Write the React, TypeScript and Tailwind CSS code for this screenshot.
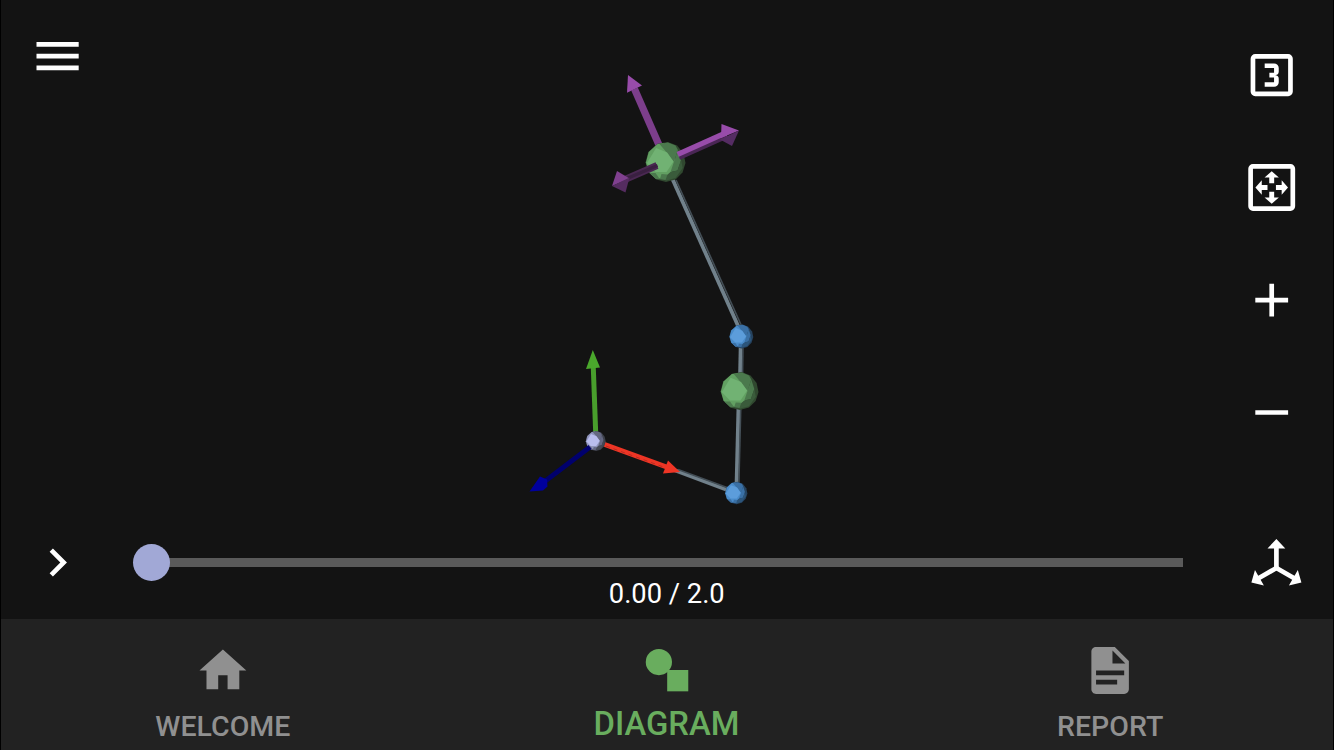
import type { ReactNode } from 'react';

type IconProps = { children: ReactNode; dx?: number; dy?: number };

/** Icon on a 24-unit grid; dx and dy nudge the drawing in those units. */
function Icon({ children, dx = 0, dy = 0 }: IconProps) {
  return (
    <svg viewBox="0 0 24 24" className="size-[56.25px] shrink-0" fill="currentColor">
      <g transform={`translate(${dx} ${dy})`}>{children}</g>
    </svg>
  );
}

type BallProps = { x: number; y: number; r: number; tones: string[] };

/** Low-poly sphere: tones run from the lit face to the shaded rim. */
function Ball({ x, y, r, tones }: BallProps) {
  return (
    <g transform={`translate(${x} ${y}) scale(${r})`}>
      <polygon fill={tones[3]} points="-.4,-.91 .12,-1 .58,-.82 .9,-.42 1,.05 .85,.52 .5,.87 .02,1 -.46,.88 -.84,.52 -1,.02 -.86,-.5" />
      <polygon fill={tones[1]} points="-.4,-.9 -.1,-.94 .1,-.8 .42,-.5 .5,.1 .3,.5 -.1,.84 -.5,.82 -.84,.5 -.98,.02 -.84,-.5" />
      <polygon fill={tones[2]} points="-.3,-.9 .12,-.97 .5,-.82 .62,-.6 .42,0 .1,-.42" />
      <polygon fill={tones[2]} points=".42,0 .62,-.6 .78,-.1 .6,.42 .25,.5" />
      <polygon fill={tones[4]} points=".25,.5 .6,.42 .78,-.1 .86,.3 .5,.8 .02,.94 -.1,.8" />
      <polygon fill={tones[2]} points="-.8,.55 -.5,.55 -.28,.86 -.48,.85" />
      <polygon fill={tones[2]} points="-.2,.6 .1,.62 0,.9 -.28,.86" />
      <polygon fill={tones[0]} points="-.47,-.7 .08,-.48 .4,-.02 .05,.5 -.5,.5 -.93,.06" />
    </g>
  );
}

const green = ['#71b273', '#62a062', '#4b794d', '#30482f', '#3a5b3b'];
const blue = ['#5c9ddb', '#4a8cca', '#3a70a5', '#26435f', '#2c557b'];
const lilac = ['#b9bdee', '#9095bd', '#646882', '#3d404b', '#454955'];

function Scene() {
  return (
    <svg viewBox="0 0 1332 618" className="absolute inset-0 h-[618px] w-[1332px]">
      <g transform="translate(-1 0)">
        <g strokeWidth="3.8" stroke="#71818b">
          <path d="M672 178L739 328" />
          <path d="M740.7 345L740 378" />
          <path d="M738.5 406L736.5 486" />
          <path d="M674 470L730 491" />
        </g>
        <g strokeWidth="1.6" stroke="#434e56">
          <path d="M676 180L742.5 328" />
          <path d="M743 345L742.5 376" />
          <path d="M740.8 406L738.8 486" />
          <path d="M678 469.5L731 489" />
        </g>

        <path d="M634.5 89L659 145" stroke="#7c3e8b" strokeWidth="7.2" />
        <polygon points="628,75 642,85.5 627,92.8" fill="#984caa" />

        <Ball x={665.5} y={162} r={20} tones={green} />

        <path d="M678 155L726 133.5" stroke="#984caa" strokeWidth="6.8" />
        <path d="M679.5 158.2L727 137" stroke="#4a2655" strokeWidth="3.2" />
        <polygon points="721.5,124 739,130.5 721,138" fill="#984caa" />
        <polygon points="720,139.5 739,130.5 732,146" fill="#552c63" />

        <path d="M657 165.5L626 179" stroke="#4a2852" strokeWidth="7.2" />
        <path d="M657.5 165.5L627 178.5" stroke="#3a2041" strokeWidth="3" />
        <polygon points="617,171 629.5,178.5 612,186" fill="#80408f" />
        <polygon points="612,186 629.5,177.5 625.5,192.5" fill="#552c60" />

        <Ball x={741.3} y={336.5} r={12} tones={blue} />
        <Ball x={739.5} y={391} r={19} tones={green} />
        <Ball x={736.2} y={493} r={11.2} tones={blue} />

        <path d="M595.7 433L593.2 365" stroke="#489f2c" strokeWidth="5" />
        <polygon points="592.8,350 600,367.5 586,369" fill="#4aa82c" />
        <path d="M602 443.5L668 467.5" stroke="#ed3525" strokeWidth="5" />
        <path d="M606 446L663 466.8" stroke="#aa2920" strokeWidth="0.8" strokeDasharray="4 4" />
        <polygon points="668,460.5 680,472 663,473.5" fill="#ef3525" />
        <Ball x={595.7} y={441} r={10} tones={lilac} />
        <path d="M590 447L544 482" stroke="#00006d" strokeWidth="4.8" />
        <polygon points="529.5,491.5 540,476.5 547,479.5 547.5,486.5 543,490.5" fill="#00009c" />
      </g>
    </svg>
  );
}

const arrow = 'M-1.05-1.8V-4.25H-3.05L0-6.95L3.05-4.25H1.05V-1.8Z';

function ViewControls() {
  return (
    <div className="flex h-full w-[123px] flex-col items-center pt-[46.8px] text-white">
      <div className="flex flex-col gap-[56.25px]">
        <button className="block">
          <Icon dx={0.25}>
            <path fillRule="evenodd" d="M5 3H19A2 2 0 0 1 21 5V19A2 2 0 0 1 19 21H5A2 2 0 0 1 3 19V5A2 2 0 0 1 5 3ZM5 5V19H19V5Z" />
            <path d="M15 15V13.5A1.5 1.5 0 0 0 13.5 12A1.5 1.5 0 0 0 15 10.5V9A2 2 0 0 0 13 7H9V9H13V11H11V13H13V15H9V17H13A2 2 0 0 0 15 15" />
          </Icon>
        </button>
        <button className="block">
          <Icon dx={0.25} dy={0.15}>
            <path fillRule="evenodd" d="M4 2H20A2 2 0 0 1 22 4V20A2 2 0 0 1 20 22H4A2 2 0 0 1 2 20V4A2 2 0 0 1 4 2ZM4 4V20H20V4Z" />
            <g transform="translate(12 12)">
              <path d={arrow} />
              <path d={arrow} transform="rotate(90)" />
              <path d={arrow} transform="rotate(180)" />
              <path d={arrow} transform="rotate(270)" />
            </g>
          </Icon>
        </button>
        <button className="block">
          <Icon dx={0.25}><path d="M19 13H13V19H11V13H5V11H11V5H13V11H19Z" /></Icon>
        </button>
        <button className="block">
          <Icon dx={0.25} dy={0.15}><path d="M19 13H5V11H19Z" /></Icon>
        </button>
      </div>
    </div>
  );
}

const axis = 'M-2.35 1V-19.6H-8.9L0-28.9L8.9-19.6H2.35V1Z';

function Timeline() {
  return (
    <div className="flex h-[84px] items-start text-white">
      <button className="flex w-[113px] justify-center">
        <Icon dx={0.2} dy={0.15}><path d="M8.59 16.58L13.17 12L8.59 7.41L10 6L16 12L10 18Z" /></Icon>
      </button>
      <div className="flex grow flex-col">
        <div className="flex h-[56.25px] items-center pl-[18.5px]">
          <div className="z-10 -mr-[37.5px] size-[37.5px] shrink-0 rounded-full bg-[#a1a8d6]" />
          <div className="ml-[18.5px] h-[9.4px] grow bg-[#5a5a5a]" />
        </div>
        <span className="-mt-[12.5px] pl-[37px] text-center font-[Roboto,sans-serif] text-[27.3px] leading-8">0.00 / 2.0</span>
      </div>
      <button className="flex w-[150.5px] justify-center pl-[36px]">
        <svg viewBox="-28.4 -34 56 56" className="size-14" fill="currentColor">
          <path d={axis} />
          <path d={axis} transform="rotate(120)" />
          <path d={axis} transform="rotate(240)" />
        </svg>
      </button>
    </div>
  );
}

function BottomNav() {
  return (
    <nav className="grid h-[131.4px] grid-cols-3 bg-[#222222] pr-[1px] font-[Roboto,sans-serif] font-medium text-[#909090]">
      <button className="flex flex-col items-center pt-[23.7px]">
        <Icon dx={-0.1} dy={0.15}><path d="M10 20V14H14V20H19V12H22L12 3L2 12H5V20Z" /></Icon>
        <span className="mt-[12px] text-[28.5px] leading-8">WELCOME</span>
      </button>
      <button className="flex flex-col items-center pt-[23.7px] text-[#69ad5e]">
        <Icon dx={0.35} dy={0.15}>
          <circle cx="8.55" cy="8.4" r="5.6" />
          <path d="M12.1 11.8H21.1V20.9H12.1Z" />
        </Icon>
        <span className="mt-[9px] text-[32.8px] leading-8">DIAGRAM</span>
      </button>
      <button className="flex flex-col items-center pt-[23.7px]">
        <Icon dy={0.15}><path d="M13 9H18.5L13 3.5V9M6 2H14L20 8V20A2 2 0 0 1 18 22H6C4.89 22 4 21.1 4 20V4C4 2.89 4.89 2 6 2M15 18V16H6V18H15M18 14V12H6V14H18Z" /></Icon>
        <span className="mt-[12px] text-[28.5px] leading-8">REPORT</span>
      </button>
    </nav>
  );
}

export default function App() {
  return (
    <div className="flex h-[750px] w-[1334px] flex-col overflow-hidden border-x border-black bg-[#131313]">
      <main className="relative flex h-[618.6px] shrink-0 flex-col">
        <Scene />
        <div className="relative flex h-[534.4px] shrink-0 justify-between">
          <button className="mt-[28px] ml-[28px] self-start text-white">
            <Icon dx={0.2}><path d="M3 6H21V8H3V6M3 11H21V13H3V11M3 16H21V18H3V16Z" /></Icon>
          </button>
          <ViewControls />
        </div>
        <div className="relative">
          <Timeline />
        </div>
      </main>
      <BottomNav />
    </div>
  );
}
